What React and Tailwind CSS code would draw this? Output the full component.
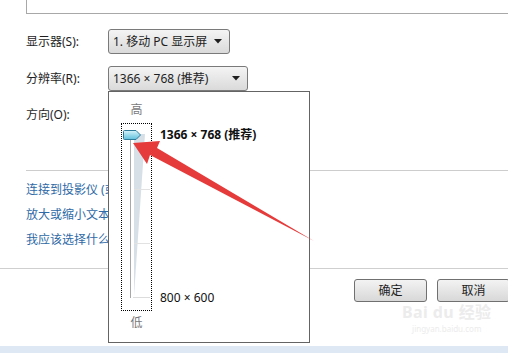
import React from "react";

const FONT = { fontFamily: '"Noto Sans", "Noto Sans CJK SC", sans-serif' };

function Caret() {
  return (
    <svg width="8" height="5" viewBox="0 0 8 5">
      <path d="M0 0 H8 L4 4.5 Z" fill="#1f1f1f" />
    </svg>
  );
}

function Select({ width, children }) {
  return (
    <div
      className={`flex items-center justify-between h-[25px] pl-[4px] pr-[7px] rounded-[3px] border border-[#7a7a7a] bg-gradient-to-b from-[#f4f4f4] to-[#dadada] text-[12px] text-[#1e1e1e] ${width}`}
    >
      <span className="whitespace-nowrap">{children}</span>
      <Caret />
    </div>
  );
}

function SliderDrawing() {
  return (
    <svg width="29" height="186" viewBox="0 0 29 186" className="block">
      <defs>
        <linearGradient id="thumb" x1="0" y1="0" x2="0" y2="1">
          <stop offset="0" stopColor="#d6f4fb" />
          <stop offset="1" stopColor="#5ec0dc" />
        </linearGradient>
      </defs>
      <path d="M12 10 L23 10 L12 172 Z" fill="#d8e0e7" />
      <line x1="12" y1="65.5" x2="28" y2="65.5" stroke="#e2e2e2" />
      <line x1="12" y1="119.5" x2="28" y2="119.5" stroke="#e2e2e2" />
      <line x1="11" y1="173.5" x2="28" y2="173.5" stroke="#dcdcdc" />
      <line x1="8.5" y1="16" x2="8.5" y2="174" stroke="#a8a8a8" />
      <path
        d="M2.5 6.5 H14 L18.5 11 L14 15.5 H2.5 Q1.5 15.5 1.5 14.5 V7.5 Q1.5 6.5 2.5 6.5 Z"
        fill="url(#thumb)"
        stroke="#2e7c9c"
      />
    </svg>
  );
}

function Popup() {
  return (
    <div className="absolute left-[108px] top-[91px] w-[202px] h-[252px] border border-[#646464] bg-white flex">
      <div className="pl-[12px] flex flex-col items-center w-[43px]">
        <div className="mt-[10px] h-[16px] leading-[16px] text-[12px] text-[#7a7a7a]">高</div>
        <div className="mt-[5px] w-[31px] h-[188px] border border-dotted border-black">
          <SliderDrawing />
        </div>
        <div className="mt-[4px] h-[16px] leading-[16px] text-[12px] text-[#7a7a7a]">低</div>
      </div>
      <div className="pl-[8px] pt-[35px] flex flex-col text-[12px] text-[#111]">
        <div className="h-[16px] leading-[16px] font-bold whitespace-nowrap">1366 × 768 (推荐)</div>
        <div className="mt-[147px] h-[16px] leading-[16px] whitespace-nowrap">800 × 600</div>
      </div>
    </div>
  );
}

function RedArrow() {
  return (
    <svg className="absolute inset-0 pointer-events-none" width="508" height="353" viewBox="0 0 508 353">
      <polygon
        points="133,143 160,141 157,148 314,241 150,155 147,164"
        fill="#e63b3b"
      />
    </svg>
  );
}

export default function App() {
  return (
    <div className="relative w-[508px] h-[353px] overflow-hidden bg-white" style={FONT}>
      <div className="ml-[26px] h-[14px] border-l border-b border-[#a8a8a8]" />

      <div className="mt-[15px] pl-[26px] flex items-center text-[12px] text-[#1e1e1e]">
        <span className="w-[82px]">显示器(S):</span>
        <Select width="w-[122px]">1. 移动 PC 显示屏</Select>
      </div>

      <div className="mt-[12px] pl-[26px] flex items-center text-[12px] text-[#1e1e1e]">
        <span className="w-[82px]">分辨率(R):</span>
        <Select width="w-[140px]">1366 × 768 (推荐)</Select>
      </div>

      <div className="mt-[16px] pl-[26px] h-[16px] leading-[16px] text-[12px] text-[#1e1e1e]">方向(O):</div>

      <div className="mt-[47px] ml-[26px] border-t border-[#cdcdcd]" />

      <div className="pl-[26px] pt-[10px] flex flex-col gap-[8px] text-[12px] text-[#2f6aa6]">
        <div className="h-[17px] leading-[17px] whitespace-nowrap">连接到投影仪 (或按 Windows 徽标键+P)</div>
        <div className="h-[17px] leading-[17px] whitespace-nowrap">放大或缩小文本和其他项目</div>
        <div className="h-[17px] leading-[17px] whitespace-nowrap">我应该选择什么显示器设置?</div>
      </div>

      <div className="mt-[20px] border-t border-[#cfcfcf]" />

      <div className="mt-[10px] pl-[354px] flex gap-[10px] text-[12px] text-[#1e1e1e]">
        <div className="w-[73px] h-[23px] shrink-0 flex items-center justify-center rounded-[3px] border border-[#707070] bg-gradient-to-b from-[#f3f3f3] to-[#d8d8d8]">确定</div>
        <div className="w-[73px] h-[23px] shrink-0 flex items-center justify-center rounded-[3px] border border-[#707070] bg-gradient-to-b from-[#f3f3f3] to-[#d8d8d8]">取消</div>
      </div>

      <div className="absolute left-[402px] top-[304px] flex flex-col items-center gap-[3px] text-[#ececec] pointer-events-none">
        <div className="text-[16px] leading-[17px] font-bold tracking-wide">Bai du 经验</div>
        <div className="text-[8px] leading-[9px]">jingyan.baidu.com</div>
      </div>

      <div className="absolute left-0 right-0 bottom-0 h-[7px] bg-[#dde8f4]" />

      <Popup />
      <RedArrow />
    </div>
  );
}
